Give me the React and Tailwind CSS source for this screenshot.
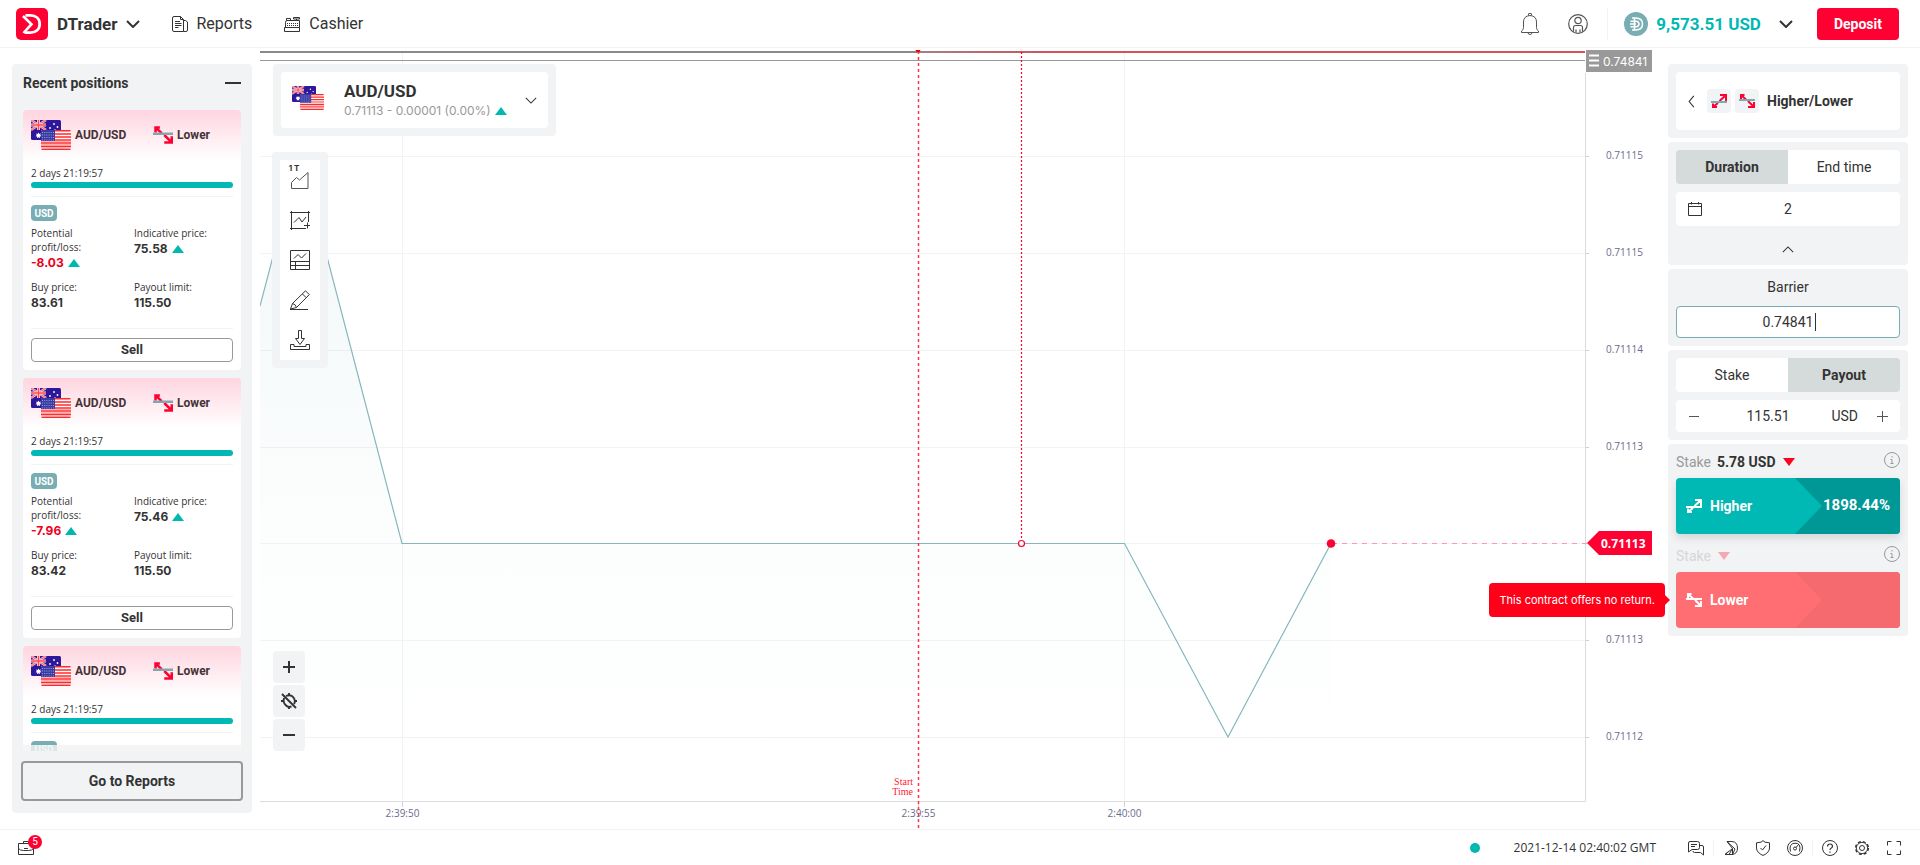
import React from "react";

function Flags({ className }) {
  return (
    <svg viewBox="0 0 40 30" className={className} aria-hidden="true">
      <rect x="0" y="0" width="30" height="20" rx="1.5" fill="#2d179b" />
      <path d="M0 0L15 10M15 0L0 10" stroke="#f3b3bd" strokeWidth="2.6" />
      <path d="M0 0L15 10M15 0L0 10" stroke="#ff5f66" strokeWidth="0.9" />
      <path d="M7.5 0V10M0 5H15" stroke="#f6dfe8" strokeWidth="3" />
      <path d="M7.5 0V10M0 5H15" stroke="#ff4a50" strokeWidth="1.5" />
      <path d="M7.5 12.4l.8 1.5 1.7-.4-.8 1.6 1.3 1.1-1.7.3.1 1.8-1.4-1.1-1.4 1.1.1-1.8-1.7-.3 1.3-1.1-.8-1.6 1.7.4z" fill="#fff" />
      <circle cx="23" cy="4" r="0.9" fill="#fff" />
      <circle cx="19" cy="8" r="0.9" fill="#fff" />
      <circle cx="26.5" cy="7" r="0.9" fill="#fff" />
      <circle cx="24" cy="9.5" r="0.5" fill="#fff" />
      <rect x="10" y="10" width="30" height="20" rx="1.5" fill="#fff" />
      <path d="M10.5 10.8H39.5M10 13.9H40M10 17H40M10 20H40M10 23.1H40M10 26.2H40M10.5 29.2H39.5" stroke="#ff2a2e" strokeWidth="1.5" />
      <path d="M10 21.5H40M10 24.6H40M10 27.7H40" stroke="#ffb0b0" strokeWidth="1.2" />
      <path d="M11 10H24V21H10V11Z" fill="#3b3aa5" />
      <path d="M11 12.5H24M11 15H24M11 17.5H24M11 20H24" stroke="#8fa3dd" strokeWidth="1" strokeDasharray="1 1.2" />
    </svg>
  );
}

function TradeIcon({ type, arrow, line, className }) {
  return (
    <svg viewBox="0 0 16 16" className={className} fill="none" strokeWidth="2" aria-hidden="true">
      {type === "higher" ? (
        <>
          <path d="M9 2H15V8M14.500 2.500L8.500 8M2 10.500V14H6M2.500 13.500L7 10" stroke={arrow} />
          <path d="M0 9H16" stroke={line} />
        </>
      ) : (
        <>
          <path d="M2 6V2H5.500M2.500 2.500L7 6.500M9 8L14.500 13.500M15 9V14H9" stroke={arrow} />
          <path d="M0 7H16" stroke={line} />
        </>
      )}
    </svg>
  );
}

function Up() {
  return (
    <svg viewBox="0 0 12 8" className="h-2 w-3" aria-hidden="true">
      <path d="M6 0L12 8H0z" fill="#00b8b0" />
    </svg>
  );
}

function Down({ className }) {
  return (
    <svg viewBox="0 0 12 8" className={className} aria-hidden="true">
      <path d="M0 0H12L6 8z" fill="#ff001f" />
    </svg>
  );
}

function Chevron({ d = "M1 1L7 7L13 1", box = "0 0 14 8", className, stroke = 2 }) {
  return (
    <svg viewBox={box} className={className} fill="none" stroke="#333" strokeWidth={stroke} aria-hidden="true">
      <path d={d} />
    </svg>
  );
}

function Header() {
  return (
    <header className="flex h-12 shrink-0 items-center border-b border-[#f2f3f4] bg-white pl-4 pr-[21px]">
      <button className="flex items-center">
        <svg viewBox="0 0 32 32" className="h-8 w-8" aria-hidden="true">
          <rect width="32" height="32" rx="5" fill="#ff0032" />
          <path d="M9.500 7.300H14.500C20 7.300 23.700 10.700 23.700 16S20 24.700 14.500 24.700H9" fill="none" stroke="#fff" strokeWidth="2.800" />
          <path d="M7 8L15.500 16.200L7.500 25" fill="none" stroke="#fff" strokeWidth="2.600" />
        </svg>
        <span className="ml-[9px] text-[17px] font-bold leading-6">DTrader</span>
        <Chevron className="ml-2 h-2 w-[14px]" />
      </button>
      <nav className="ml-8 flex items-center gap-8">
        <a href="#reports" className="flex items-center gap-[9px]">
          <svg viewBox="0 0 16 16" className="h-4 w-4" fill="none" stroke="#333" aria-hidden="true">
            <path d="M11.500 15.500H2Q.5 15.500.5 14V2Q.5.5 2 .5H8.500L11.500 3.500V15.500H14Q15.500 15.500 15.500 14V6L13.500 4.500H11.500M8.500.5V3.500H11.500M3 5.500H8M3 7.500H9.500M3 9.500H9.500M3 11.500H6.500" />
          </svg>
          <span className="text-base leading-6">Reports</span>
        </a>
        <a href="#cashier" className="flex items-center gap-[9px]">
          <svg viewBox="0 0 16 16" className="h-4 w-4" fill="none" stroke="#333" aria-hidden="true">
            <path d="M1.500 11.500V6.500Q1.500 4.500 3 4.500H15.500V11.500M.5 11.500H15.500V15.500H.5zM9.500 1.500H15.500V3H9.500zM12.500 3V4.500M2.500 4.500V2.500H6.500V4.500" />
            <path d="M3 7.500H14M3 9.500H14" strokeDasharray="1 1" />
          </svg>
          <span className="text-base leading-6">Cashier</span>
        </a>
      </nav>
      <div className="ml-auto flex items-center">
        <button aria-label="Notifications" className="mr-7">
          <svg viewBox="0 0 20 24" className="h-6 w-5" fill="none" stroke="#555" aria-hidden="true">
            <path d="M8.500 3.500V2Q8.500 1.500 9 1.500H11Q11.500 1.500 11.500 2V3.500M1.500 20.500V19Q3.500 18 3.500 15.500V10Q3.500 4 10 3.500Q16.500 4 16.500 10V15.500Q16.500 18 18.500 19V20.500zM8 20.500Q8 22.500 10 22.500T12 20.500" />
          </svg>
        </button>
        <button aria-label="Account" className="mr-[19px]">
          <svg viewBox="0 0 20 20" className="h-5 w-5" fill="none" stroke="#555" strokeWidth="1.200" aria-hidden="true">
            <circle cx="10" cy="10" r="9.300" />
            <circle cx="10" cy="6.500" r="3.200" />
            <path d="M5.500 17.800V13.500Q5.500 11.500 7.500 11.500H12.500Q14.500 11.500 14.500 13.500V17.800M8 15.500V18.500M12 15.500V18.500" />
          </svg>
        </button>
        <span className="h-8 w-px bg-[#f2f3f4]" />
        <button className="ml-4 flex items-center">
          <svg viewBox="0 0 24 24" className="h-6 w-6" aria-hidden="true">
            <circle cx="12" cy="12" r="12" fill="#77adb3" />
            <path d="M8 6H12Q18.500 6.200 18.500 12T12 18H8M10.500 6V18M6.500 9.200H12.500Q15 9.800 15 12T12.500 14.800H6.500M6 12H12" fill="none" stroke="#fff" strokeWidth="1.500" />
          </svg>
          <span className="ml-2 text-[17px] font-bold leading-6 text-[#00b8b4]">9,573.51 USD</span>
          <Chevron className="ml-[18px] h-2 w-[14px]" />
        </button>
        <button className="ml-6 h-8 rounded bg-[#ff0032] px-[17px] text-sm font-bold text-white">Deposit</button>
      </div>
    </header>
  );
}

const positions = [
  { id: 1, profit: "-8.03", price: "75.58", buy: "83.61", limit: "115.50" },
  { id: 2, profit: "-7.96", price: "75.46", buy: "83.42", limit: "115.50" },
  { id: 3, profit: "-7.96", price: "75.46", buy: "83.42", limit: "115.50" },
];

function PositionCard({ item }) {
  return (
    <article className="shrink-0 rounded bg-white bg-[linear-gradient(180deg,#ffd5e0_0px,#ffffff_50px)] p-2">
      <div className="flex h-[34px] items-center text-xs font-bold text-[#463238]">
        <Flags className="h-[30px] w-10" />
        <span className="ml-1">AUD/USD</span>
        <span className="ml-auto mr-[23px] flex items-center gap-1">
          <TradeIcon type="lower" arrow="#ff0032" line="#85a4ad" className="h-5 w-5" />
          Lower
        </span>
      </div>
      <p className="mt-[14px] font-[Open_Sans,sans-serif] text-[10px] leading-[14px]">2 days 21:19:57</p>
      <div className="mt-0.5 h-1.5 rounded-full bg-[#00b8b4]" />
      <div className="mt-2 border-t border-[#f2f3f4] pt-2">
        <span className="flex h-4 w-[26px] items-center justify-center rounded bg-[#77adb3] text-[10px] font-bold text-white">
          USD
        </span>
      </div>
      <dl className="mt-[5px] grid grid-cols-2 gap-x-1 font-[Open_Sans,sans-serif] text-[10px] leading-[14px]">
        <div className="h-[54px]">
          <dt className="w-16">Potential profit/loss:</dt>
          <dd className="flex items-center gap-1 font-[Inter,sans-serif] text-xs font-bold leading-[18px] text-[#ec0020]">
            {item.profit} <Up />
          </dd>
        </div>
        <div>
          <dt>Indicative price:</dt>
          <dd className="flex items-center gap-1 font-[Inter,sans-serif] text-xs font-bold leading-[18px]">
            {item.price} <Up />
          </dd>
        </div>
        <div>
          <dt>Buy price:</dt>
          <dd className="font-[Inter,sans-serif] text-xs font-bold leading-[18px]">{item.buy}</dd>
        </div>
        <div>
          <dt>Payout limit:</dt>
          <dd className="font-[Inter,sans-serif] text-xs font-bold leading-[18px]">{item.limit}</dd>
        </div>
      </dl>
      <div className="mt-4 border-t border-[#f2f3f4] pt-2">
        <button className="h-6 w-full rounded border border-[#999] text-[13px] font-bold leading-5">Sell</button>
      </div>
    </article>
  );
}

function Positions() {
  return (
    <aside className="my-4 ml-3 flex w-60 shrink-0 flex-col rounded bg-[#f2f3f4]">
      <div className="flex h-[46px] shrink-0 items-center justify-between px-[11px] pb-2">
        <h2 className="text-sm font-bold">Recent positions</h2>
        <button aria-label="Minimise" className="flex h-6 w-4 items-center">
          <span className="h-0.5 w-4 bg-[#333]" />
        </button>
      </div>
      <div className="relative flex min-h-0 flex-1 flex-col gap-2 overflow-hidden px-[11px]">
        {positions.map((p) => (
          <PositionCard key={p.id} item={p} />
        ))}
        <div className="absolute inset-x-0 bottom-0 h-1.5 bg-[#f2f3f4]/80" />
      </div>
      <button className="mx-[9px] mb-3 mt-[10px] h-10 shrink-0 rounded border-2 border-[#999] text-sm font-bold">
        Go to Reports
      </button>
    </aside>
  );
}

const gridRows = [
  { y: 156.5, label: "0.71115" },
  { y: 253.5, label: "0.71115" },
  { y: 350.5, label: "0.71114" },
  { y: 447.5, label: "0.71113" },
  { y: 543.5, label: "" },
  { y: 640.5, label: "0.71113" },
  { y: 737.5, label: "0.71112" },
];

const gridCols = [
  { x: 402.5, label: "2:39:50", line: true },
  { x: 918.5, label: "2:39:55", line: false },
  { x: 1124.5, label: "2:40:00", line: true },
];

function PriceChart() {
  return (
    <svg
      viewBox="260 48 1408 781"
      preserveAspectRatio="xMinYMin meet"
      className="block h-full w-full"
      role="img"
      aria-label="AUD/USD price chart"
    >
      <defs>
        <linearGradient id="area" gradientUnits="userSpaceOnUse" x1="0" y1="152" x2="0" y2="801">
          <stop offset="0" stopColor="#77adc3" stopOpacity="0.100" />
          <stop offset="0.600" stopColor="#77adb3" stopOpacity="0.020" />
          <stop offset="1" stopColor="#77adb3" stopOpacity="0" />
        </linearGradient>
        <linearGradient id="barrier" gradientUnits="userSpaceOnUse" x1="918" y1="0" x2="1050" y2="0">
          <stop offset="0" stopColor="#a48084" />
          <stop offset="1" stopColor="#cf5359" />
        </linearGradient>
      </defs>
      {gridRows.map((r) => (
        <path key={r.y} d={`M260 ${r.y}H1585`} stroke="#f2f3f4" />
      ))}
      {gridCols.filter((c) => c.line).map((c) => (
        <path key={c.x} d={`M${c.x} 50V801`} stroke="#f2f3f4" />
      ))}
      <path d="M260 306L297 165H303L402 543.500H1124.500L1228 737L1331 543.500V801H260z" fill="url(#area)" />
      <path d="M260 306L297 165H303L402 543.500H1124.500L1228 737L1331 543.500" fill="none" stroke="#85b7bc" strokeWidth="1.200" />
      <path d="M1585.500 73V801.500H260" fill="none" stroke="#dcdce0" />
      <path d="M1586 156.500h3M1586 253.500h3M1586 350.500h3M1586 447.500h3M1586 640.500h3M1586 737.500h3" stroke="#d0d0d6" />
      <path d="M402.500 802v5M918.500 802v5M1124.500 802v5" stroke="#d0d0d6" />
      <path d="M260 52H918" stroke="#8d8787" strokeWidth="2" />
      <path d="M918 51H1585V53H918z" fill="url(#barrier)" />
      <path d="M260 60.500H1585" stroke="#999" />
      <g fontFamily="Open Sans, sans-serif" fontSize="10" fill="#6b6b8d">
        {gridRows.map((r) => (
          <text key={r.y} x="1606" y={r.y + 2.5}>{r.label}</text>
        ))}
        {gridCols.map((c) => (
          <text key={c.x} x={c.x} y="817" textAnchor="middle">{c.label}</text>
        ))}
      </g>
      <path d="M918.500 51V828" stroke="#ff3347" strokeWidth="1.500" strokeDasharray="3 3" />
      <path d="M915.500 50h5l-1 2h-3z" fill="#ff0000" />
      <path d="M1021.500 52V539" stroke="#ff0022" strokeDasharray="2 2" strokeWidth="1.200" />
      <g fontFamily="Liberation Serif, serif" fontSize="10" fill="#ff1a33" textAnchor="end">
        <text x="913" y="785">Start</text>
        <text x="913" y="795">Time</text>
      </g>
      <circle cx="1021.500" cy="543.500" r="3" fill="#fff" stroke="#ff0032" strokeWidth="1.200" />
      <path d="M1332 543.500H1587" stroke="#ff99ab" strokeDasharray="5 5" strokeWidth="1.200" />
      <circle cx="1331" cy="543.500" r="4.300" fill="#ff0032" />
      <rect x="1586" y="50" width="66" height="22" fill="#999" />
      <path d="M1589 55.500h10M1589 60.500h10M1589 65.500h10" stroke="#fff" strokeWidth="2" />
      <text x="1603" y="66" fontSize="12" fill="#fff" fontFamily="Inter, sans-serif">0.74841</text>
      <path d="M1587 543L1599 531H1652V555H1599z" fill="#ff0032" />
      <text x="1601" y="548" fontSize="12" fontWeight="700" fill="#fff" fontFamily="Open Sans, sans-serif">0.71113</text>
    </svg>
  );
}

function ToolIcon({ children }) {
  return (
    <svg viewBox="0 0 20 20" className="h-5 w-5" fill="none" stroke="#333" aria-hidden="true">
      {children}
    </svg>
  );
}

function Chart() {
  return (
    <section className="relative ml-2 min-w-0 flex-1">
      <PriceChart />
      <button className="absolute left-[13px] top-4 rounded bg-[#f2f3f4] p-2 text-left">
        <span className="flex h-14 w-[267px] items-center rounded bg-white px-[11px]">
          <Flags className="mb-1 h-6 w-8" />
          <span className="ml-5 flex flex-col pt-1">
            <span className="text-[17px] font-bold leading-[18px]">AUD/USD</span>
            <span className="flex items-center gap-1 whitespace-nowrap font-[Inter,sans-serif] text-xs leading-[22px] text-[#999]">
              0.71113 - 0.00001 (0.00%) <Up />
            </span>
          </span>
          <Chevron className="ml-auto h-[7px] w-3" stroke={1.2} />
        </span>
      </button>
      <div className="absolute left-3 top-[104px] rounded bg-[#f2f3f4] p-2">
        <div className="flex flex-col bg-white">
          <button aria-label="Chart type" className="flex h-10 w-10 flex-col items-center pt-1">
            <span className="mr-3 font-[Inter,sans-serif] text-[8px] font-bold leading-[8px]">1 T</span>
            <svg viewBox="0 0 18 18" className="h-[18px] w-[18px]" fill="none" stroke="#555" aria-hidden="true">
              <path d="M.5 16.500V10.500L5.500 5.500L8.500 8L17 .5V16.500z" />
            </svg>
          </button>
          <button aria-label="Indicators" className="flex h-10 w-10 items-center justify-center">
            <ToolIcon>
              <path d="M0 2.500H20M1.500 1V20M0 18.500H16M18.500 1V12M14 15.500H20M17.500 12.500V18.500" />
              <path d="M4 12.500L9 7.500L12 12L16 7" />
            </ToolIcon>
          </button>
          <button aria-label="Templates" className="flex h-10 w-10 items-center justify-center">
            <ToolIcon>
              <path d="M.5.5H19.500V19.500H.5zM.5 11.500H19.500M.5 15.500H19.500M5.500 11.500V19.500" />
              <path d="M4 8.500L8 4.500L11.500 8L16 3.500" />
            </ToolIcon>
          </button>
          <button aria-label="Drawing tools" className="flex h-10 w-10 items-center justify-center">
            <ToolIcon>
              <path d="M.5 19L2.500 13.500L15.500.8L19.300 4.600L6.500 17.500zM12.500 4L16 7.500M2.500 13.500Q5.500 14 6.500 17.500M0 19.500H18" />
            </ToolIcon>
          </button>
          <button aria-label="Download" className="flex h-10 w-10 items-center justify-center">
            <ToolIcon>
              <path d="M8.500.5H11.500V8.500H14.500L10 14.500L5.500 8.500H8.500zM4 14.500H.5V19.500H19.500V14.500H16V16.500H4z" />
            </ToolIcon>
          </button>
        </div>
      </div>
      <div className="absolute bottom-[78px] left-[13px] flex flex-col gap-0.5">
        <button aria-label="Zoom in" className="flex h-8 w-8 items-center justify-center rounded bg-[#f2f3f4]">
          <svg viewBox="0 0 12 12" className="h-3 w-3" stroke="#333" strokeWidth="2" aria-hidden="true">
            <path d="M6 0V12M0 6H12" />
          </svg>
        </button>
        <button aria-label="Recentre" className="flex h-8 w-8 items-center justify-center rounded bg-[#f2f3f4]">
          <svg viewBox="0 0 16 16" className="h-4 w-4" fill="none" stroke="#333" strokeWidth="1.900" aria-hidden="true">
            <path d="M5 3Q10 .8 12.500 4.500T13 11M3.200 5Q1.500 9 4.500 12T10.500 13.300M8 0V2.500M16 8H13.500M8 16V13.500M0 8H2.500M1 1L15 15" />
          </svg>
        </button>
        <button aria-label="Zoom out" className="flex h-8 w-8 items-center justify-center rounded bg-[#f2f3f4]">
          <span className="h-0.5 w-3 bg-[#333]" />
        </button>
      </div>
    </section>
  );
}

function Tabs({ left, right, active }) {
  const on = "flex-1 bg-[#d5dada] text-sm font-bold";
  const off = "flex-1 bg-white text-sm";
  return (
    <div className="flex h-[34px] overflow-hidden rounded">
      <button className={active === "left" ? on : off}>{left}</button>
      <button className={active === "right" ? on : off}>{right}</button>
    </div>
  );
}

function Info() {
  return (
    <svg viewBox="0 0 16 16" className="mb-1 ml-auto h-4 w-4" fill="none" stroke="#999" aria-hidden="true">
      <circle cx="8" cy="8" r="7.500" />
      <path d="M8 4V5.500M6.500 7.500H8V11.500M6.500 11.500H9.500" />
    </svg>
  );
}

function TradePanel() {
  return (
    <aside className="my-4 mr-3 flex w-60 shrink-0 flex-col gap-1">
      <section className="rounded bg-[#f2f3f4] p-2">
        <button className="flex h-[58px] w-full items-center rounded bg-white px-3">
          <Chevron d="M6 1L1 7L6 13" box="0 0 7 14" stroke={1.2} className="h-[13px] w-[7px]" />
          <span className="ml-3 flex h-6 w-6 items-center justify-center rounded bg-[#f2f3f4]">
            <TradeIcon type="higher" arrow="#ff0032" line="#77adb3" className="h-4 w-4" />
          </span>
          <span className="ml-1 flex h-6 w-6 items-center justify-center rounded bg-[#f2f3f4]">
            <TradeIcon type="lower" arrow="#ff0032" line="#77adb3" className="h-4 w-4" />
          </span>
          <span className="ml-2 text-sm font-bold">Higher/Lower</span>
        </button>
      </section>
      <section className="rounded bg-[#f2f3f4] p-2 pb-0">
        <Tabs left="Duration" right="End time" active="left" />
        <div className="relative mt-2">
          <input aria-label="Duration in days" defaultValue="2" className="block h-[34px] w-full rounded bg-white text-center text-sm outline-none" />
          <svg viewBox="0 0 14 14" className="absolute left-3 top-[10px] h-[14px] w-[14px]" fill="none" stroke="#333" aria-hidden="true">
            <path d="M.5 1.500H13.500V13.500H.5zM.5 4.500H13.500M3.500 0V2.500M10.500 0V2.500" />
          </svg>
        </div>
        <button aria-label="Collapse" className="flex h-[39px] w-full items-center justify-center pt-2">
          <Chevron d="M1 7L7 1L13 7" stroke={1.2} className="h-[7px] w-3" />
        </button>
      </section>
      <section className="rounded bg-[#f2f3f4] p-2">
        <label htmlFor="barrier-input" className="block pb-[9px] text-center text-sm leading-5">
          Barrier
        </label>
        <div className="relative">
          <input
            id="barrier-input"
            defaultValue="0.74841"
            className="block h-8 w-full rounded border border-[#77adb3] bg-white text-center text-sm outline-none"
          />
          <span className="absolute left-1/2 top-[7px] ml-[27px] h-[18px] w-px bg-[#333]" />
        </div>
      </section>
      <section className="rounded bg-[#f2f3f4] p-2">
        <Tabs left="Stake" right="Payout" active="right" />
        <div className="mt-2 flex h-8 items-center rounded bg-white">
          <button aria-label="Decrease" className="flex h-8 w-9 items-center justify-center">
            <span className="h-px w-[10px] bg-[#555]" />
          </button>
          <input aria-label="Payout amount" defaultValue="115.51" className="min-w-0 flex-1 text-center text-sm outline-none" />
          <span className="w-10 pr-1.5 text-right text-sm">USD</span>
          <button aria-label="Increase" className="flex h-8 w-9 items-center justify-center">
            <svg viewBox="0 0 11 11" className="h-[11px] w-[11px]" stroke="#555" aria-hidden="true">
              <path d="M5.500 0V11M0 5.500H11" />
            </svg>
          </button>
        </div>
      </section>
      <section className="rounded bg-[#f2f3f4] p-2">
        <div className="flex h-[26px] items-center pb-1.5 text-sm">
          <span className="text-[#999]">Stake</span>
          <span className="ml-1.5 font-bold">5.78 USD</span>
          <Down className="ml-2 h-2 w-3" />
          <Info />
        </div>
        <button className="flex h-14 w-full items-center rounded bg-[#00b8b4] pl-[10px] text-sm font-bold text-white shadow-[0_4px_8px_rgba(0,0,0,0.12)]">
          <TradeIcon type="higher" arrow="#fff" line="#fff" className="h-4 w-4" />
          <span className="ml-2">Higher</span>
          <span className="ml-auto flex h-full w-[105px] items-center justify-end rounded-r bg-[#009896] pr-[10px] text-[15px] [clip-path:polygon(0_0,100%_0,100%_100%,0_100%,27px_50%)]">
            1898.44%
          </span>
        </button>
        <div className="mt-3 flex h-[26px] items-center pb-1.5 text-sm">
          <span className="text-[#d6d6d6]">Stake</span>
          <Down className="ml-[7px] h-2 w-3 opacity-30" />
          <Info />
        </div>
        <div className="relative">
          <button
            aria-describedby="lower-note"
            className="flex h-14 w-full items-center rounded bg-[#ff6e73] pl-[10px] text-sm font-bold text-white"
          >
            <TradeIcon type="lower" arrow="#fff" line="#fff" className="h-4 w-4" />
            <span className="ml-2">Lower</span>
            <span className="ml-auto h-full w-[105px] rounded-r bg-[#f46a6e] [clip-path:polygon(0_0,100%_0,100%_100%,0_100%,27px_50%)]" />
          </button>
          <div
            id="lower-note"
            role="tooltip"
            className="absolute right-full top-[11px] mr-[11px] flex h-[34px] items-center whitespace-nowrap rounded bg-[#ff0019] px-[10px] font-[Inter,sans-serif] text-[11px] text-white"
          >
            This contract offers no return.
            <span className="absolute -right-[5px] top-3 h-[10px] w-[5px] bg-[#ff0019] [clip-path:polygon(0_0,100%_50%,0_100%)]" />
          </div>
        </div>
      </section>
    </aside>
  );
}

function FootIcon({ label, children }) {
  return (
    <button aria-label={label} className="h-4 w-4">
      <svg viewBox="0 0 16 16" className="h-4 w-4" fill="none" stroke="#333" aria-hidden="true">
        {children}
      </svg>
    </button>
  );
}

function Footer() {
  return (
    <footer className="flex h-9 shrink-0 items-center border-t border-[#f2f3f4] bg-white px-[18px]">
      <button aria-label="Open positions" className="relative">
        <svg viewBox="0 0 16 16" className="h-4 w-4" fill="none" stroke="#333" aria-hidden="true">
          <path d="M.5 3.500H15.500V14.500H.5zM5.500 3.500V1.500H10.500V3.500M.5 8.500Q2 10.500 5.500 10.500H10.500Q14 10.500 15.500 8.500M6 8.500H10" />
        </svg>
        <span className="absolute -top-[5px] left-[10px] flex h-[14px] w-[14px] items-center justify-center rounded-full bg-[#ff0032] text-[10px] text-white">
          5
        </span>
      </button>
      <span className="ml-auto h-[10px] w-[10px] rounded-full bg-[#00b8b4]" />
      <time className="ml-[34px] mr-8 font-[Open_Sans,sans-serif] text-xs">2021-12-14 02:40:02 GMT</time>
      <FootIcon label="Chat">
        <path d="M2 1.500H9.500Q11.500 1.500 11.500 3.500V7.500Q11.500 9.500 9.500 9.500H4L.5 12V3Q.5 1.500 2 1.500zM3 4.500H9M3 6.500H7M12 5.500H14Q15.500 5.500 15.500 7V15L12.500 12.500H6.500Q5 12.500 5 11" />
      </FootIcon>
      <span className="mx-[9px] h-4 w-px bg-[#f2f3f4]" />
      <div className="flex items-center gap-4">
        <FootIcon label="Deriv">
          <path d="M4 1.500H9Q14.500 2 14.500 8T9 14.500H2L9.500 8.500zM4 1.500L12 9M2 14.500L5.500 11.500M6 14.500L9.500 8.500M9.500 14.500V8.500M12 9L9.500 14.500" />
        </FootIcon>
        <FootIcon label="Responsible trading">
          <path d="M8 .6L10 2.200L14.500 2.800V8Q14.500 12.500 8 15.500Q1.500 12.500 1.500 8V2.800L6 2.200zM5.500 8L7.500 10L11 5.500" />
        </FootIcon>
        <FootIcon label="Account limits">
          <circle cx="8" cy="8" r="7.500" />
          <path d="M3.500 11.500Q1.500 3.500 8 3.200T12.500 11.500M9 7.500L12 4" />
          <circle cx="8" cy="8.500" r="1.500" />
        </FootIcon>
      </div>
      <span className="mx-[9px] h-4 w-px bg-[#f2f3f4]" />
      <div className="flex items-center gap-4">
        <FootIcon label="Help">
          <circle cx="8" cy="8" r="7.500" />
          <path d="M5.500 6.500Q5.500 4 8 4T10.500 6.300Q10.500 7.500 9 8.300Q8 8.800 8 10M8 11.500V12.800" strokeWidth="1.200" />
        </FootIcon>
        <FootIcon label="Settings">
          <circle cx="8" cy="8" r="6.400" strokeWidth="1.400" strokeDasharray="3 2.030" />
          <circle cx="8" cy="8" r="5.600" strokeWidth="0.900" />
          <circle cx="8" cy="8" r="2.500" />
        </FootIcon>
        <FootIcon label="Full screen">
          <path d="M1.500 5.500V1.500H5.500M10.500 1.500H14.500V5.500M14.500 10.500V14.500H10.500M5.500 14.500H1.500V10.500" />
        </FootIcon>
      </div>
    </footer>
  );
}

export default function App() {
  return (
    <div className="flex h-screen flex-col overflow-hidden bg-white font-[Roboto,sans-serif] text-[#333]">
      <Header />
      <main className="flex min-h-0 flex-1">
        <Positions />
        <Chart />
        <TradePanel />
      </main>
      <Footer />
    </div>
  );
}
